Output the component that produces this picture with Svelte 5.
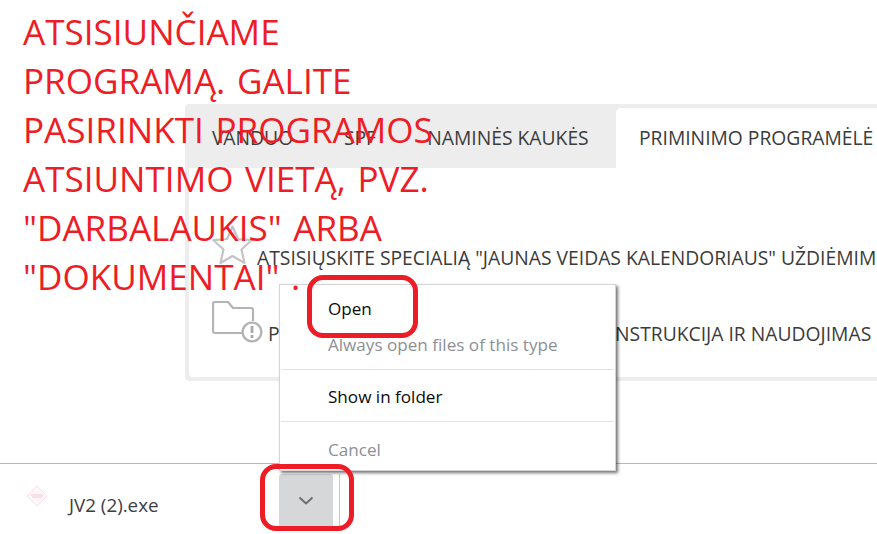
<script>
  const tabs = [
    { label: 'VANDUO', width: 135 },
    { label: 'SPF', width: 80 },
    { label: 'NAMINĖS KAUKĖS', width: 216 }
  ];
  const lines = [
    'ATSISIUNČIAME',
    'PROGRAMĄ. GALITE',
    'PASIRINKTI PROGRAMOS',
    'ATSIUNTIMO VIETĄ, PVZ.',
    '"DARBALAUKIS" ARBA',
    '"DOKUMENTAI" .'
  ];
</script>

<div class="page">
  <main class="main">
    <section class="panel">
      <nav class="tabbar">
        {#each tabs as t}
          <div class="tab" style="width:{t.width}px">{t.label}</div>
        {/each}
        <div class="tab active">PRIMINIMO PROGRAMĖLĖ</div>
      </nav>
      <div class="body">
        <div class="row first">
          <svg class="icon" width="42" height="42" viewBox="0 0 42 42" fill="none">
            <path d="M20.5 2.5 L26 15 L39.5 16.2 L29.5 25.5 L32.5 39 L20.5 32 L8.5 39 L11.5 25.5 L1.5 16.2 L15 15 Z" stroke="#c4c4c4" stroke-width="2.2" stroke-linejoin="round"/>
          </svg>
          <span>ATSISIŲSKITE SPECIALIĄ "JAUNAS VEIDAS KALENDORIAUS" UŽDIĖMIMŲ PROGRAMĄ</span>
        </div>
        <div class="row second">
          <svg class="icon" width="52" height="42" viewBox="0 0 52 42" fill="none">
            <path d="M30 32 H3 Q1 32 1 30 V3 Q1 1 3 1 H16 L21 7 H39 Q41 7 41 9 V20" stroke="#b4b4b4" stroke-width="2.2" stroke-linejoin="round"/>
            <circle cx="40" cy="31" r="9.4" fill="#fff" stroke="#b4b4b4" stroke-width="2.4"/>
            <path d="M40 25 V32" stroke="#a8a8a8" stroke-width="2.8"/>
            <path d="M40 34 V37" stroke="#a8a8a8" stroke-width="2.8"/>
          </svg>
          <span>PRIMINIMO PROGRAMĖLĖS DIEGIMO, INSTRUKCIJA IR NAUDOJIMAS</span>
        </div>
      </div>
    </section>
  </main>

  <footer class="shelf">
    <div class="file">
      <svg class="fileicon" width="22" height="22" viewBox="0 0 22 22" fill="none">
        <path d="M11 1 L21 11 L11 21 L1 11 Z" fill="#fef6f8" stroke="#fadfe4" stroke-width="1"/>
        <path d="M5 10 H17 M6 12 H16" stroke="#eccbd2" stroke-width="1"/>
      </svg>
      <span class="filename">JV2 (2).exe</span>
    </div>
    <div class="arrow">
      <svg width="16" height="10" viewBox="0 0 16 10" fill="none">
        <path d="M1.5 1.5 L8 7.5 L14.5 1.5" stroke="#6d6d6d" stroke-width="2"/>
      </svg>
    </div>
    <div class="sep"></div>
  </footer>

  <div class="menu">
    <div class="item">Open</div>
    <div class="item dim">Always open files of this type</div>
    <hr />
    <div class="item">Show in folder</div>
    <hr />
    <div class="item dim">Cancel</div>
  </div>

  <div class="annotation">
    {#each lines as l}<div>{l}</div>{/each}
  </div>

  <div class="ring ring-open"></div>
  <div class="ring ring-arrow"></div>
</div>

<style>
  :global(body) {
    margin: 0;
    background: #fff;
  }
  .page {
    position: relative;
    width: 877px;
    height: 534px;
    overflow: hidden;
    display: flex;
    flex-direction: column;
    font-family: "Open Sans", "Liberation Sans", sans-serif;
    background: #fff;
  }
  .main {
    height: 463px;
    padding: 104px 0 0 185px;
    box-sizing: border-box;
    flex: none;
  }
  .panel {
    width: 720px;
    height: 277px;
    box-sizing: border-box;
    background: #ededed;
    border-radius: 4px 0 0 4px;
    padding: 0 0 4px 4px;
    display: flex;
    flex-direction: column;
  }
  .tabbar {
    display: flex;
    height: 64px;
    margin-left: -4px;
    flex: none;
    align-items: flex-end;
    color: #3b3b3b;
    font-size: 19.3px;
  }
  .tab {
    height: 64px;
    display: flex;
    align-items: center;
    justify-content: center;
    box-sizing: border-box;
    padding-top: 2px;
    white-space: nowrap;
    flex: none;
  }
  .tab.active {
    background: #fff;
    height: 60px;
    width: 289px;
    padding: 0 0 2px 23px;
    justify-content: flex-start;
    border-radius: 5px 0 0 0;
  }
  .body {
    flex: 1;
    background: #fff;
    border-radius: 0 0 0 4px;
    color: #3b3b3b;
    font-size: 19.3px;
    padding-left: 23px;
    white-space: nowrap;
    overflow: hidden;
  }
  .row {
    display: flex;
    align-items: flex-start;
  }
  .row.first {
    margin-top: 56px;
  }
  .row.second {
    margin-top: 31px;
  }
  .row span {
    line-height: 24px;
  }
  .row.first span {
    margin: 22px 0 0 3px;
  }
  .row.second span {
    margin: 21px 0 0 4px;
  }
  .icon {
    flex: none;
  }
  .shelf {
    flex: 1;
    border-top: 1px solid #b8b8b8;
    display: flex;
    align-items: flex-start;
    box-sizing: border-box;
    background: #fff;
  }
  .file {
    width: 279px;
    display: flex;
    align-items: center;
    height: 70px;
    padding-left: 26px;
    box-sizing: border-box;
    flex: none;
  }
  .fileicon {
    margin-top: -6px;
  }
  .filename {
    font-size: 18.8px;
    color: #3c4043;
    margin-left: 21px;
    margin-top: 12px;
  }
  .arrow {
    width: 54px;
    height: 54px;
    margin-top: 10px;
    background: #d6d7d9;
    border-radius: 3px;
    display: flex;
    align-items: center;
    justify-content: center;
    flex: none;
  }
  .arrow svg {
    margin-top: -1px;
  }
  .sep {
    width: 1px;
    height: 54px;
    margin: 10px 0 0 6px;
    background: #c8c8c8;
  }
  .annotation {
    position: absolute;
    left: 23px;
    top: 7px;
    color: #ee1c25;
    font-size: 35.1px;
    word-spacing: 2.5px;
    line-height: 49px;
    white-space: nowrap;
  }
  .menu {
    position: absolute;
    left: 279px;
    top: 284px;
    width: 337px;
    height: 187px;
    box-sizing: border-box;
    background: #fff;
    border: 1px solid #d4d4d4;
    box-shadow: 2px 2px 3px rgba(0, 0, 0, 0.55);
    font-size: 17.1px;
    color: #0b0b0b;
  }
  .item {
    height: 36px;
    line-height: 36px;
    padding-left: 48px;
  }
  .item:first-child {
    height: 42px;
    line-height: 48px;
  }
  .item.dim {
    color: #8d8f94;
  }
  .menu hr {
    margin: 0 1px;
    border: 0;
    border-top: 1px solid #e4e4e4;
    height: 0;
  }
  .menu hr:nth-of-type(1) {
    margin-top: 6px;
    margin-bottom: 9px;
  }
  .menu hr:nth-of-type(2) {
    margin-top: 6px;
    margin-bottom: 10px;
  }
  .ring {
    position: absolute;
    border: 5px solid #ee1c25;
    box-sizing: border-box;
  }
  .ring-open {
    left: 307px;
    top: 275px;
    width: 111px;
    height: 63px;
    border-radius: 16px;
  }
  .ring-arrow {
    left: 260px;
    top: 464px;
    width: 94px;
    height: 67px;
    border-radius: 16px;
  }
</style>
